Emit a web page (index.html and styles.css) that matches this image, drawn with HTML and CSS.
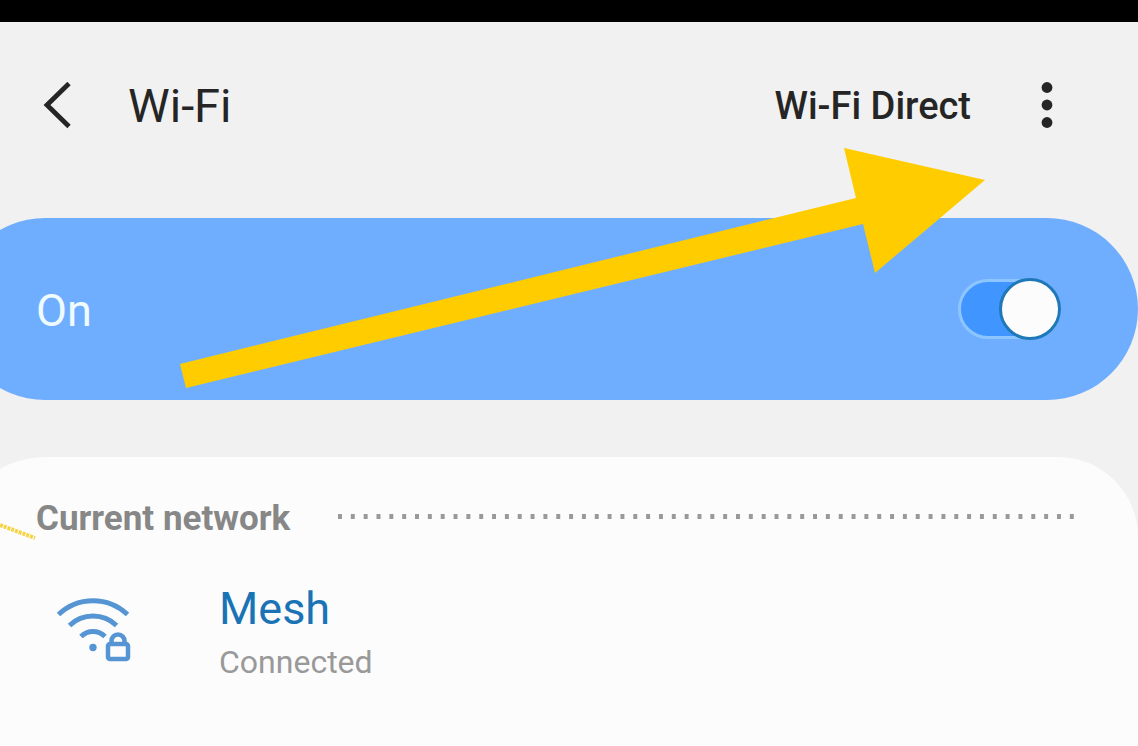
FILE: index.html
```
<!DOCTYPE html>
<html lang="en">
<head>
    <meta charset="UTF-8">
    <meta name="viewport" content="width=device-width, initial-scale=1.0">
    <title>Wi-Fi</title>

    <link rel="stylesheet" href="styles.css">
</head>
<body>

    <div id="wrapper">

        <div class="status_bar"></div>

        <header class="header">

            <button class="icon_button back" type="button" aria-label="Back">
                <svg width="30" height="48" viewBox="0 0 30 48">
                    <path d="M27 1.500 5 23 27 44.500" fill="none" stroke="#252525" stroke-width="4.8"/>
                </svg>
            </button>

            <h1 class="title">Wi-Fi</h1>

            <button class="direct" type="button">Wi-Fi Direct</button>

            <button class="icon_button more" type="button" aria-label="More options">
                <svg width="12" height="48" viewBox="0 0 12 48" fill="#252525">
                    <circle cx="6" cy="5.500" r="5.4"/>
                    <circle cx="6" cy="23" r="5.4"/>
                    <circle cx="6" cy="40.500" r="5.4"/>
                </svg>
            </button>

        </header>

        <main>

            <section class="power">
                <label class="power_label" for="wifi_switch">On</label>
                <input class="switch" id="wifi_switch" type="checkbox" role="switch" checked>
            </section>

            <section class="networks">

                <div class="section_head">
                    <h2 class="section_title">Current network</h2>
                    <svg class="dots" height="5" aria-hidden="true">
                        <line x1="0" y1="2.5" x2="100%" y2="2.5" pathLength="745" stroke="#999" stroke-width="5" stroke-dasharray="4 9"/>
                    </svg>
                </div>

                <a class="network" href="#">

                    <svg class="network_icon" width="76" height="66" viewBox="0 0 76 66" fill="none" stroke="#5595d3" stroke-width="5">
                        <path d="M2.5 16.5A50 50 0 0 1 71.5 16.5"/>
                        <path d="M13.500 27.500A34 34 0 0 1 60.500 27.500"/>
                        <path d="M25 38.500A17 17 0 0 1 49 38.500"/>
                        <circle cx="37" cy="49.500" r="3.700" fill="#5595d3" stroke="none"/>
                        <rect x="52" y="46" width="20" height="15" rx="2" stroke-width="4.5"/>
                        <path d="M55.5 46V43a6.500 6.500 0 0 1 13 0V46" stroke-width="4.5"/>
                    </svg>

                    <span class="network_text">
                        <span class="network_name">Mesh</span>
                        <span class="network_state">Connected</span>
                    </span>

                </a>

            </section>

        </main>

        <svg class="arrow" width="985" height="540" viewBox="0 0 985 540" aria-hidden="true">
            <path d="M844 148 985 180 875 273 863 224 186 388 180 364 856 198Z" fill="#fc0"/>
            <path d="M0 525 35 538" stroke="#f5d544" stroke-width="4" stroke-dasharray="3 1"/>
        </svg>

    </div>

</body>
</html>
```
FILE: styles.css
```
*, *::before{
    box-sizing: border-box;
}

body{
    margin: 0;

    font-family: Roboto, sans-serif;
    color: #252525;
    background: #f1f1f1;
}

h1, h2{
    margin: 0;
}

button{
    padding: 0;

    font-family: inherit;
    color: inherit;

    border: none;
    background: none;
    cursor: pointer;
}

#wrapper{
    min-height: 100vh;

    display: flex;
    flex-direction: column;

    position: relative;
    overflow: hidden;
}

.status_bar{
    height: 22px;
    background: #000;
}

.header{
    padding: 52px 85px 80px 42px;

    display: flex;
    align-items: center;
}

.icon_button{
    display: flex;
}

.title{
    margin-left: 56px;

    font-size: 47px;
    font-weight: 400;
    line-height: 64px;
}

.direct{
    margin-left: auto;

    font-size: 38px;
    font-weight: 500;
    line-height: 64px;
}

.more{
    margin-left: 70px;
}

main{
    flex: 1;

    display: flex;
    flex-direction: column;
    gap: 57px;
}

/* both panels run past the left edge of the screen */
.power, .networks{
    margin-left: -46px;
    padding-left: 82px;
}

.power{
    height: 182px;
    padding-right: 77px;

    display: flex;
    align-items: center;
    justify-content: space-between;

    border-radius: 91px;
    background: #6faeff;
}

.power_label{
    padding-top: 4px;

    font-size: 45px;
    line-height: 54px;
    color: #f0fbff;
}

.switch{
    width: 103px;
    height: 60px;
    margin: 0;

    position: relative;
    appearance: none;

    border: 3px solid #8dc6ff;
    border-radius: 30px;
    background: #4095ff;
    cursor: pointer;
}

.switch::before{
    content: "";

    width: 62px;
    height: 62px;

    position: absolute;
    top: -4px;
    right: -3px;

    border: 3px solid #1f78b8;
    border-radius: 50%;
    background: #fcfcfc;
}

.switch:not(:checked)::before{
    right: 38px;
}

.networks{
    flex: 1;
    padding-top: 38px;

    border-radius: 91px 80px 0 0;
    background: #fcfcfc;
}

.section_head{
    padding-right: 64px;

    display: flex;
    align-items: center;
    gap: 48px;
}

.section_title{
    padding-top: 2px;

    font-size: 35px;
    font-weight: 700;
    line-height: 44px;
    color: #878787;
}

.dots{
    flex: 1;
    min-width: 0;
    margin-bottom: 4px;
}

.network{
    padding: 37px 64px 48px 20px;

    display: flex;
    align-items: center;
    gap: 87px;

    text-decoration: none;
}

.network_text{
    display: flex;
    flex-direction: column;
}

.network_name{
    font-size: 45px;
    line-height: 62px;
    color: #1a73b5;
}

.network_state{
    font-size: 32px;
    line-height: 44px;
    color: #999;
}

.arrow{
    position: absolute;
    top: 0;
    left: 0;

    pointer-events: none;
}
```
